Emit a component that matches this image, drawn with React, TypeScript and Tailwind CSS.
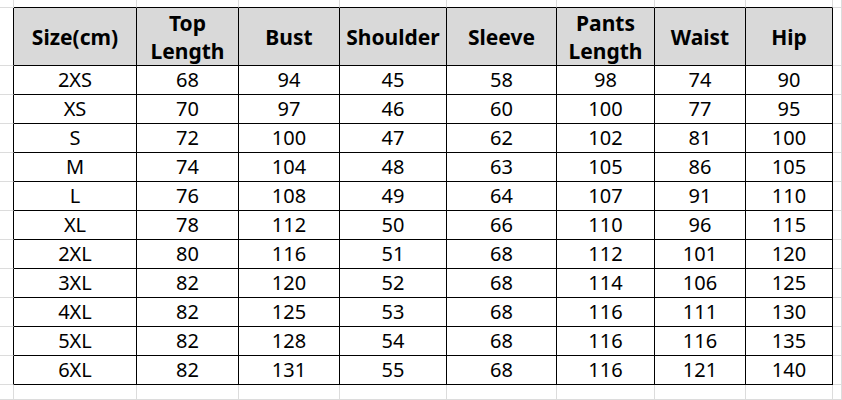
import React from "react";

const headers: string[][] = [
  ["Size(cm)"],
  ["Top", "Length"],
  ["Bust"],
  ["Shoulder"],
  ["Sleeve"],
  ["Pants", "Length"],
  ["Waist"],
  ["Hip"],
];

const rows: (string | number)[][] = [
  ["2XS", 68, 94, 45, 58, 98, 74, 90],
  ["XS", 70, 97, 46, 60, 100, 77, 95],
  ["S", 72, 100, 47, 62, 102, 81, 100],
  ["M", 74, 104, 48, 63, 105, 86, 105],
  ["L", 76, 108, 49, 64, 107, 91, 110],
  ["XL", 78, 112, 50, 66, 110, 96, 115],
  ["2XL", 80, 116, 51, 68, 112, 101, 120],
  ["3XL", 82, 120, 52, 68, 114, 106, 125],
  ["4XL", 82, 125, 53, 68, 116, 111, 130],
  ["5XL", 82, 128, 54, 68, 116, 116, 135],
  ["6XL", 82, 131, 55, 68, 116, 121, 140],
];

const NROWS = 14; // top margin, header, 11 data rows, bottom margin
const NCOLS = 10; // left margin, 8 columns, right margin

export default function App() {
  const cells: React.ReactNode[] = [];
  for (let r = 0; r < NROWS; r++) {
    for (let c = 0; c < NCOLS; c++) {
      const inTableRow = r >= 1 && r <= 12;
      const inTableCol = c >= 1 && c <= 8;
      const rightBlack = inTableRow && c <= 8;
      const bottomBlack = inTableCol && r <= 12;
      const isHeader = r === 1 && inTableCol;
      const isData = r >= 2 && r <= 12 && inTableCol;
      let content: React.ReactNode = null;
      if (isHeader) {
        content = headers[c - 1].map((t, i) => <span key={i} className="block">{t}</span>);
      } else if (isData) {
        content = String(rows[r - 2][c - 1]);
      }
      cells.push(
        <div
          key={`${r}-${c}`}
          className={[
            "flex flex-col items-center justify-center text-center border-r border-b",
            rightBlack ? "border-r-black" : "border-r-[#dcdcdc]",
            bottomBlack ? "border-b-black" : "border-b-[#dcdcdc]",
            isHeader ? "bg-[#d9d9d9] font-bold text-[21px] leading-[28px]" : "bg-white text-[20px] leading-[24px]",
            "text-black",
          ].join(" ")}
        >
          {content}
        </div>
      );
    }
  }
  return (
    <div
      className="w-[842px] h-[400px] bg-white overflow-hidden grid grid-cols-[14px_123px_102px_101px_107px_110px_98px_91px_87px_9px] grid-rows-[8px_58px_repeat(11,29px)_15px]"
      style={{ fontFamily: '"Noto Sans", "Open Sans", sans-serif' }}
    >
      {cells}
    </div>
  );
}
